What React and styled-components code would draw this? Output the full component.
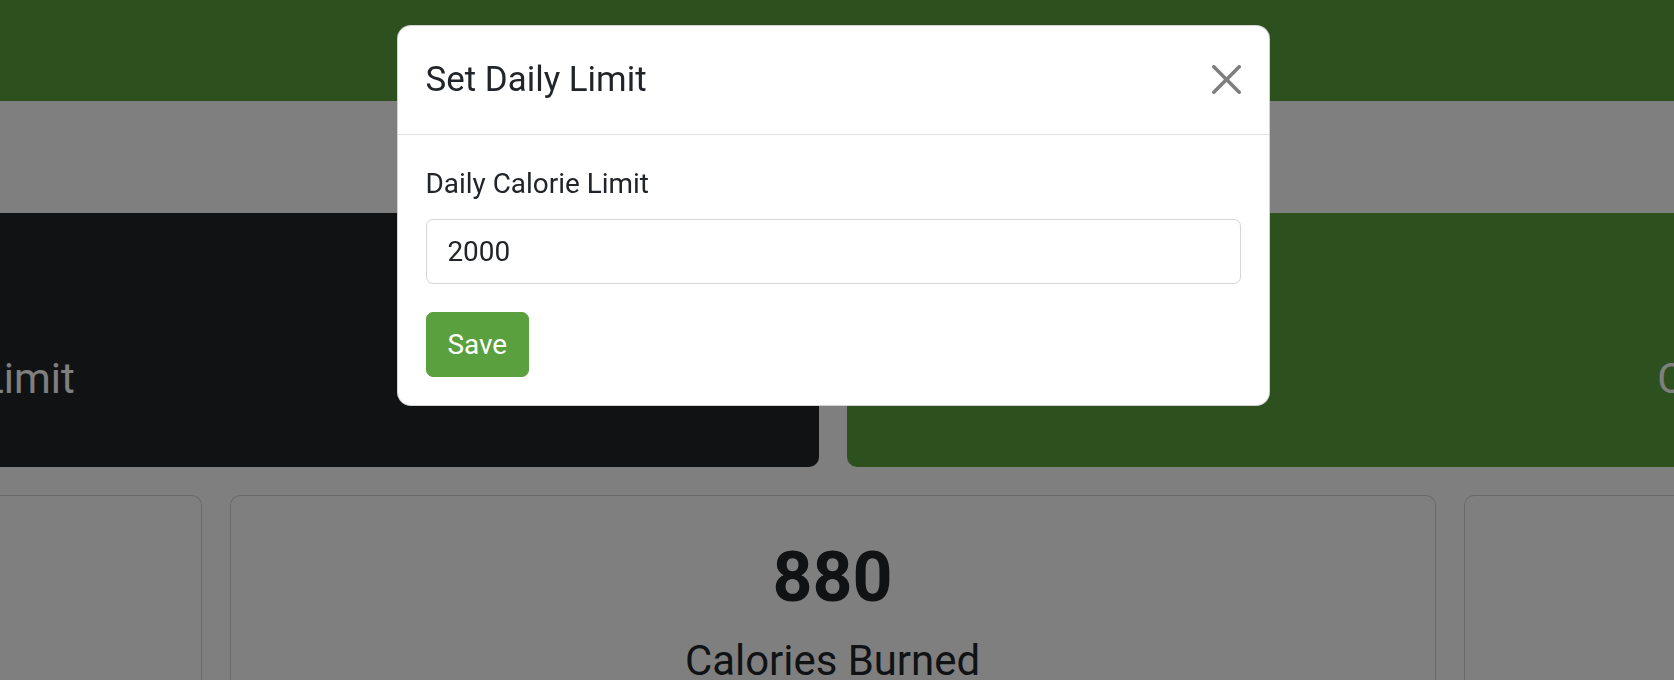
import React from "react";
import styled, { createGlobalStyle } from "styled-components";

const GlobalStyle = createGlobalStyle`
  *, *::before, *::after { box-sizing: border-box; }
  html, body { margin: 0; padding: 0; }
  body {
    font-family: Roboto, "Liberation Sans", Arial, sans-serif;
    color: #212529;
    background: #ffffff;
    overflow: hidden;
  }
`;

const GREEN = "#5ba03f";
const DARK = "#212529";

const Page = styled.div`
  width: 1674px;
  height: 680px;
  overflow: hidden;
  display: flex;
  flex-direction: column;
  background: #ffffff;
`;

const Navbar = styled.header`
  flex: none;
  height: 101px;
  background: ${GREEN};
`;

const Main = styled.main`
  flex: none;
  width: 3674px;
  margin-left: -1004.5px;
  padding-top: 112px;
  display: flex;
  flex-direction: column;
  gap: 28px;
`;

const Row = styled.div`
  display: grid;
  grid-template-columns: repeat(${(p) => p.$cols}, 1fr);
  gap: 28px;
`;

const toneBg = { dark: DARK, green: GREEN, light: "#ffffff" };

const StatCard = styled.div`
  background: ${(p) => toneBg[p.$tone]};
  color: ${(p) => (p.$tone === "light" ? "#212529" : "#ffffff")};
  border: 1px solid ${(p) => (p.$tone === "light" ? "rgba(0,0,0,0.175)" : "transparent")};
  border-radius: 10px;
  padding: 40px 28px ${(p) => p.$pb}px;
  display: flex;
  flex-direction: column;
  align-items: center;
  text-align: center;
`;

const Value = styled.div`
  font-size: 69.8px;
  font-weight: 700;
  line-height: 1.2;
`;

const Label = styled.div`
  margin-top: 16px;
  font-size: 41.9px;
  font-weight: 400;
  line-height: 1.2;
  white-space: nowrap;
`;

const Backdrop = styled.div`
  position: fixed;
  inset: 0;
  background: rgba(0, 0, 0, 0.5);
  z-index: 1040;
`;

const ModalLayer = styled.div`
  position: fixed;
  inset: 0;
  z-index: 1050;
  display: flex;
  justify-content: center;
  align-items: flex-start;
  padding-right: 8px;
`;

const Dialog = styled.div`
  width: 873px;
  margin-top: 25px;
  background: #ffffff;
  border: 1px solid rgba(0, 0, 0, 0.175);
  border-radius: 14px;
  display: flex;
  flex-direction: column;
`;

const Header = styled.div`
  display: flex;
  align-items: center;
  justify-content: space-between;
  padding: 28px;
  border-bottom: 1px solid #dee2e6;
`;

const Title = styled.h5`
  margin: 0;
  font-size: 34.9px;
  font-weight: 400;
  line-height: 1.5;
  color: #212529;
`;

const CloseButton = styled.button`
  display: flex;
  align-items: center;
  justify-content: center;
  width: 29px;
  height: 29px;
  padding: 0;
  margin: -2px 0 0 auto;
  border: 0;
  background: transparent;
  opacity: 0.5;
  cursor: pointer;
  svg { display: block; }
`;

const Body = styled.div`
  padding: 28px;
`;

const FormGroup = styled.div`
  margin-bottom: 28px;
`;

const FieldLabel = styled.label`
  display: block;
  margin-bottom: 14px;
  font-size: 27.92px;
  line-height: 1.5;
  color: #212529;
`;

const Input = styled.input`
  display: block;
  width: 100%;
  padding: 10.47px 20.94px;
  font-family: inherit;
  font-size: 27.92px;
  line-height: 1.5;
  color: #212529;
  background: #ffffff;
  border: 1px solid #d2d5d9;
  border-radius: 7px;
  outline: none;
`;

const SaveButton = styled.button`
  display: inline-block;
  padding: 10.47px 20.94px;
  font-family: inherit;
  font-size: 27.92px;
  font-weight: 400;
  line-height: 1.5;
  color: #ffffff;
  background: ${GREEN};
  border: 1px solid ${GREEN};
  border-radius: 7px;
  cursor: pointer;
`;

const topStats = [
  { tone: "dark", value: "2000", label: "Daily Calorie Limit" },
  { tone: "green", value: "1120", label: "Consumed" },
];

const bottomStats = [
  { value: "2000", label: "Calories Consumed" },
  { value: "880", label: "Calories Burned" },
  { value: "1120", label: "Net Calories" },
];

export default function App() {
  return (
    <>
      <GlobalStyle />
      <Page>
        <Navbar />
        <Main>
          <Row $cols={2}>
            {topStats.map((s) => (
              <StatCard key={s.label} $tone={s.tone} $pb={62}>
                <Value>{s.value}</Value>
                <Label>{s.label}</Label>
              </StatCard>
            ))}
          </Row>
          <Row $cols={3}>
            {bottomStats.map((s) => (
              <StatCard key={s.label} $tone="light" $pb={40}>
                <Value>{s.value}</Value>
                <Label>{s.label}</Label>
              </StatCard>
            ))}
          </Row>
        </Main>
      </Page>
      <Backdrop />
      <ModalLayer>
        <Dialog role="dialog" aria-modal="true">
          <Header>
            <Title>Set Daily Limit</Title>
            <CloseButton type="button" aria-label="Close">
              <svg width="29" height="29" viewBox="0 0 16 16" fill="#000">
                <path d="M.293.293a1 1 0 0 1 1.414 0L8 6.586 14.293.293a1 1 0 1 1 1.414 1.414L9.414 8l6.293 6.293a1 1 0 0 1-1.414 1.414L8 9.414l-6.293 6.293a1 1 0 0 1-1.414-1.414L6.586 8 .293 1.707a1 1 0 0 1 0-1.414z" />
              </svg>
            </CloseButton>
          </Header>
          <Body>
            <FormGroup>
              <FieldLabel htmlFor="limit">Daily Calorie Limit</FieldLabel>
              <Input id="limit" type="number" defaultValue="2000" />
            </FormGroup>
            <SaveButton type="button">Save</SaveButton>
          </Body>
        </Dialog>
      </ModalLayer>
    </>
  );
}
